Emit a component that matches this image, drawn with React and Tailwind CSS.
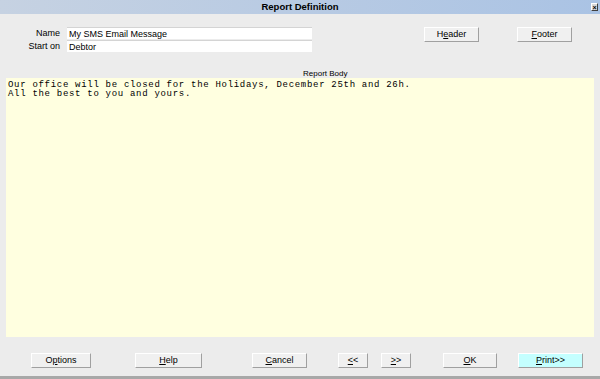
import React from 'react';

const Btn = ({ children, className = '', w }) => (
    <div className={`h-[15px] flex items-center justify-center border border-t-white border-l-white border-r-[#a0a0a0] border-b-[#a0a0a0] text-[9px] text-black ${w} ${className}`}>{children}</div>
);

const U = ({ c }) => <span className="underline">{c}</span>;

export default function App() {
    return (
        <div className="w-[600px] h-[379px] bg-[#ececec] flex flex-col font-['Liberation_Sans',Arial,sans-serif] overflow-hidden">
            <div className="h-[14px] relative flex items-center justify-center bg-gradient-to-r from-[#c6d2e2] to-[#aac3e4]">
                <span className="text-[9.5px] font-bold text-black leading-none">Report Definition</span>
                <div className="absolute right-[2px] top-[3px] w-[7px] h-[8px] bg-[#d8d8d8] border border-t-white border-l-white border-r-[#404040] border-b-[#404040] flex items-center justify-center text-[7px] font-bold leading-none">×</div>
            </div>

            <div className="flex items-start pt-[13px]">
                <div className="w-[60px] flex flex-col gap-[1px] text-[9px] text-right">
                    <div className="h-[12px] leading-[12px]">Name</div>
                    <div className="h-[12px] leading-[12px]">Start on</div>
                </div>
                <div className="ml-[7px] w-[245px] flex flex-col gap-[1px] text-[9px]">
                    <div className="h-[12px] leading-[12px] bg-white border-t border-[#d4d4d4] pl-[2px]">My SMS Email Message</div>
                    <div className="h-[12px] leading-[12px] bg-white border-t border-[#d4d4d4] pl-[2px]">Debtor</div>
                </div>
                <Btn w="w-[55px]" className="ml-[112px] bg-[#f0f0f0]">H<U c="e" />ader</Btn>
                <Btn w="w-[55px]" className="ml-[38px] bg-[#f0f0f0]"><U c="F" />ooter</Btn>
            </div>

            <div className="mt-[17px] h-[9px] leading-[9px] pl-[303px] text-[8px]">Report Body</div>

            <div className="mx-[6px] h-[259px] bg-[#ffffe0] px-[2px] pt-[3px] font-['Liberation_Mono','Courier_New',monospace] text-[9px] leading-[9px] tracking-[0.7px] text-black whitespace-pre">
                <div>Our office will be closed for the Holidays, December 25th and 26h.</div>
                <div>All the best to you and yours.</div>
            </div>

            <div className="flex items-center mt-[16px]">
                <Btn w="w-[60px]" className="ml-[31px] bg-[#f0f0f0]">O<U c="p" />tions</Btn>
                <Btn w="w-[67px]" className="ml-[44px] bg-[#f0f0f0]"><U c="H" />elp</Btn>
                <Btn w="w-[55px]" className="ml-[50px] bg-[#f0f0f0]"><U c="C" />ancel</Btn>
                <Btn w="w-[30px]" className="ml-[31px] bg-[#f0f0f0]"><U c="<" />&lt;</Btn>
                <Btn w="w-[30px]" className="ml-[13px] bg-[#f0f0f0]"><U c=">" />&gt;</Btn>
                <Btn w="w-[54px]" className="ml-[32px] bg-[#f0f0f0]"><U c="O" />K</Btn>
                <Btn w="w-[65px]" className="ml-[21px] bg-[#c4ffff]"><U c="P" />rint&gt;&gt;</Btn>
            </div>

            <div className="mt-auto h-[3px] bg-[#a8a8a8]" />
        </div>
    );
}
